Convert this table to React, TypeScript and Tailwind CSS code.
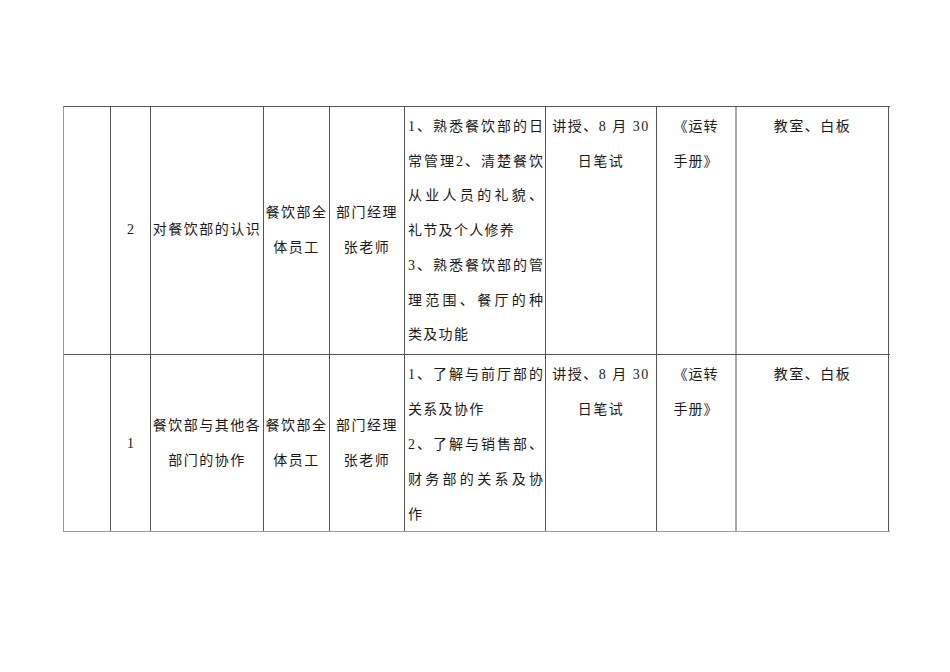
import React from "react";

type Row = {
  no: string;
  title: string[];
  who: string[];
  teacher: string[];
  content: { text: string; full: boolean }[];
  method: string[];
  book: string[];
  place: string;
  height: string;
  lead: string;
  pad: string;
  bottom: string;
};

const rows: Row[] = [
  {
    no: "2",
    title: ["对餐饮部的认识"],
    who: ["餐饮部全", "体员工"],
    teacher: ["部门经理", "张老师"],
    content: [
      { text: "1、熟悉餐饮部的日", full: true },
      { text: "常管理2、清楚餐饮", full: true },
      { text: "从业人员的礼貌、", full: true },
      { text: "礼节及个人修养", full: false },
      { text: "3、熟悉餐饮部的管", full: true },
      { text: "理范围、餐厅的种", full: true },
      { text: "类及功能", full: false },
    ],
    method: ["讲授、8 月 30", "日笔试"],
    book: ["《运转", "手册》"],
    place: "教室、白板",
    height: "h-[248px]",
    lead: "leading-[34.7px]",
    pad: "pt-[3px]",
    bottom: "border-[#555]",
  },
  {
    no: "1",
    title: ["餐饮部与其他各", "部门的协作"],
    who: ["餐饮部全", "体员工"],
    teacher: ["部门经理", "张老师"],
    content: [
      { text: "1、了解与前厅部的", full: true },
      { text: "关系及协作", full: false },
      { text: "2、了解与销售部、", full: true },
      { text: "财务部的关系及协", full: true },
      { text: "作", full: false },
    ],
    method: ["讲授、8 月 30", "日笔试"],
    book: ["《运转", "手册》"],
    place: "教室、白板",
    height: "h-[177px]",
    lead: "leading-[35px]",
    pad: "pt-[2px]",
    bottom: "border-[#9a9a9a]",
  },
];

const Lines: React.FC<{ lines: string[] }> = ({ lines }) => (
  <>
    {lines.map((l, i) => (
      <div key={i} className="whitespace-nowrap">
        {l}
      </div>
    ))}
  </>
);

const Justified: React.FC<{ text: string; full: boolean }> = ({ text, full }) => {
  if (!full) return <div className="whitespace-nowrap tracking-[1.3px]">{text}</div>;
  return (
    <div className="flex justify-between">
      {Array.from(text).map((c, i) => (
        <span key={i}>{c}</span>
      ))}
    </div>
  );
};

export default function App() {
  return (
    <div className="min-h-[672px] w-[950px] bg-white pt-[106px] pl-[63px] font-['Liberation_Serif','Noto_Sans_CJK_SC',serif] text-[14px] text-[#1a1a1a]">
      <div className="w-[827px] border-t border-l border-t-[#555] border-l-[#9a9a9a]">
        {rows.map((r) => (
          <div key={r.no} className={`flex border-b ${r.bottom} ${r.height} ${r.lead}`}>
            <div className="w-[47px] shrink-0 border-r border-[#555]" />
            <div className="flex w-[40px] shrink-0 items-center justify-center border-r border-[#555]">
              {r.no}
            </div>
            <div className="flex w-[113px] shrink-0 flex-col items-center justify-center border-r border-[#555] tracking-[1.5px]">
              <Lines lines={r.title} />
            </div>
            <div className="flex w-[66px] shrink-0 flex-col items-center justify-center border-r border-[#555] tracking-[1.5px]">
              <Lines lines={r.who} />
            </div>
            <div className="flex w-[75px] shrink-0 flex-col items-center justify-center border-r border-[#555] tracking-[1.5px]">
              <Lines lines={r.teacher} />
            </div>
            <div className={`w-[141px] shrink-0 border-r border-[#555] pl-[3px] pr-[2px] ${r.pad}`}>
              {r.content.map((c, i) => (
                <Justified key={i} text={c.text} full={c.full} />
              ))}
            </div>
            <div className={`w-[111px] shrink-0 border-r border-[#555] text-center tracking-[1.5px] ${r.pad}`}>
              <Lines lines={r.method} />
            </div>
            <div className={`w-[80px] shrink-0 border-r-2 border-[#aaa] text-center tracking-[1px] ${r.pad}`}>
              <Lines lines={r.book} />
            </div>
            <div className={`w-[152px] shrink-0 border-r border-[#555] text-center tracking-[1.5px] ${r.pad}`}>
              {r.place}
            </div>
          </div>
        ))}
      </div>
    </div>
  );
}
